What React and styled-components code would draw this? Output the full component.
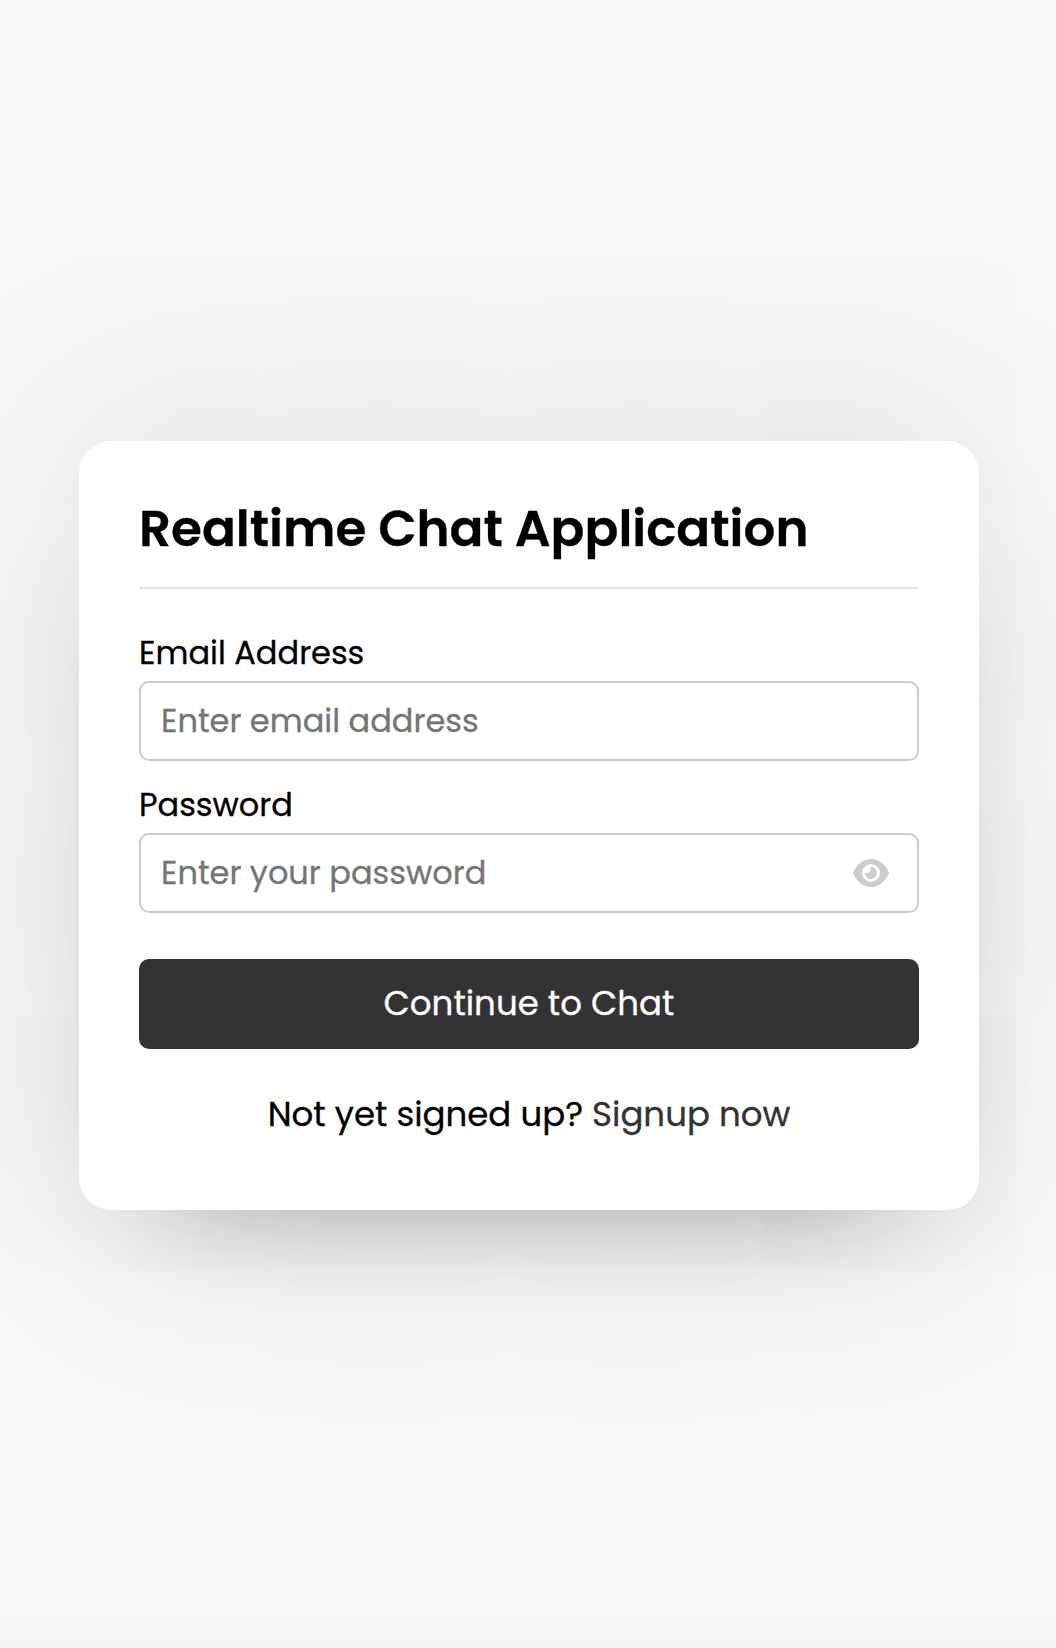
import React, { useState } from 'react';
import styled, { createGlobalStyle } from 'styled-components';
import { FaEye } from 'react-icons/fa6';

const GlobalStyle = createGlobalStyle`
  *, *::before, *::after {
    box-sizing: border-box;
    margin: 0;
    padding: 0;
  }

  body, input, button {
    font-family: Poppins, Inter, sans-serif;
    -webkit-text-stroke-width: 0.3px;
  }
`;

const Page = styled.div`
  display: flex;
  align-items: center;
  justify-content: center;
  min-height: 100vh;
  padding: 3px 0 0 2px;
  overflow: hidden;
  background: linear-gradient(to top, #f1f1f1, #f4f4f4 10px, #f7f7f7 32px);
`;

const Card = styled.main`
  width: 900px;
  padding: 50px 60px;
  border-radius: 32px;
  background: #fff;
  color: #000;
  box-shadow:
    0 0 290px 0 rgba(0, 0, 0, 0.11),
    0 64px 128px -96px rgba(0, 0, 0, 0.5);
`;

const Title = styled.h1`
  padding-bottom: 21px;
  border-bottom: 2px solid #e6e6e6;
  font-size: 50px;
  font-weight: 600;
  line-height: 75px;
`;

const Form = styled.form`
  display: flex;
  flex-direction: column;
  gap: 20px;
  padding: 40px 0 0;
`;

const Field = styled.div`
  display: flex;
  flex-direction: column;
  gap: 4px;
`;

const Label = styled.label`
  font-size: 32px;
  line-height: 48px;
`;

const InputBox = styled.div`
  display: flex;
  align-items: center;
  height: 80px;
  padding: 0 28px 0 20px;
  border: 2px solid #ccc;
  border-radius: 10px;
`;

const Input = styled.input`
  flex: 1;
  min-width: 0;
  height: 100%;
  border: 0;
  outline: 0;
  background: none;
  font-size: 32px;

  &::placeholder {
    color: #757575;
    opacity: 1;
  }
`;

const Toggle = styled.button`
  display: flex;
  border: 0;
  background: none;
  color: #ccc;
  cursor: pointer;

  svg {
    width: 36px;
    height: 32px;
  }
`;

const Submit = styled.button`
  height: 90px;
  margin-top: 26px;
  padding-bottom: 2px;
  border: 0;
  border-radius: 10px;
  background: #333;
  color: #fff;
  font-size: 34px;
  cursor: pointer;
`;

const Footer = styled.p`
  padding: 20px 0;
  font-size: 34px;
  line-height: 51px;
  text-align: center;
`;

const SignupLink = styled.a`
  color: #333;
  text-decoration: none;
`;

export default function App() {
  const [visible, setVisible] = useState(false);

  return (
    <>
      <GlobalStyle />
      <Page>
        <Card>
          <Title>Realtime Chat Application</Title>
          <Form onSubmit={(event) => event.preventDefault()}>
            <Field>
              <Label htmlFor="email">Email Address</Label>
              <InputBox>
                <Input id="email" type="text" placeholder="Enter email address" />
              </InputBox>
            </Field>
            <Field>
              <Label htmlFor="password">Password</Label>
              <InputBox>
                <Input
                  id="password"
                  type={visible ? 'text' : 'password'}
                  placeholder="Enter your password"
                />
                <Toggle type="button" aria-label="Show password" onClick={() => setVisible(!visible)}>
                  <FaEye />
                </Toggle>
              </InputBox>
            </Field>
            <Submit type="submit">Continue to Chat</Submit>
            <Footer>
              Not yet signed up? <SignupLink href="#">Signup now</SignupLink>
            </Footer>
          </Form>
        </Card>
      </Page>
    </>
  );
}
